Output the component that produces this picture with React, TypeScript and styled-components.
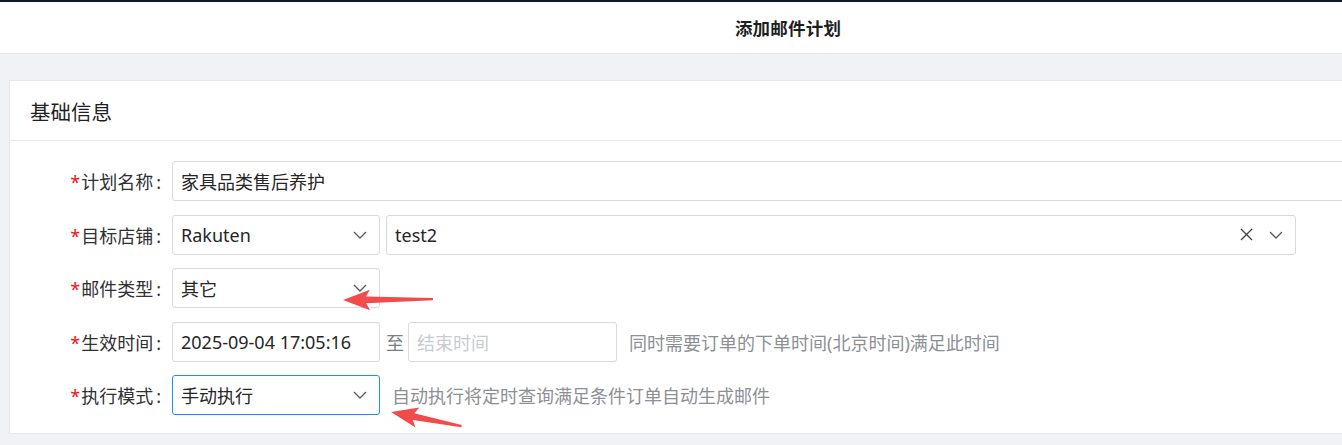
import styled, { createGlobalStyle } from "styled-components";

const GlobalStyle = createGlobalStyle`
  html, body {
    margin: 0;
    padding: 0;
    background: #f0f2f5;
    overflow: hidden;
  }
  body {
    font-family: "Noto Sans", "Noto Sans CJK SC", sans-serif;
    color: #303133;
  }
`;

const Page = styled.div`
  position: relative;
  width: 1576px;
  min-height: 445px;
  background: #f0f2f5;
`;

const TopBar = styled.div`
  height: 2px;
  background: #0c1a2b;
`;

const Header = styled.header`
  height: 51px;
  background: #ffffff;
  border-bottom: 1px solid #e4e6ea;
  display: flex;
  align-items: center;
  justify-content: center;
`;

const Title = styled.h1`
  margin: 0;
  font-size: 17.5px;
  font-weight: 700;
  color: #1f1f1f;
  letter-spacing: 0.2px;
`;

const Content = styled.main`
  padding: 26px 9px 0 9px;
`;

const Card = styled.section`
  background: #ffffff;
  border: 1px solid #e6e8eb;
`;

const CardHeader = styled.div`
  height: 59px;
  display: flex;
  align-items: center;
  padding-left: 20px;
  border-bottom: 1px solid #e6e8eb;
  font-size: 20.5px;
  color: #1f1f1f;
`;

const CardBody = styled.div`
  padding: 20px 0 18px 0;
  display: flex;
  flex-direction: column;
  gap: 13.5px;
`;

const FormRow = styled.div`
  display: flex;
  align-items: center;
  height: 40px;
`;

const Label = styled.label`
  width: 151px;
  flex: none;
  padding-right: 11px;
  text-align: right;
  font-size: 18px;
  color: #303133;
  white-space: nowrap;
`;

const Required = styled.span`
  color: #f01414;
  margin-right: 1px;
`;

const Colon = styled.span`
  margin-left: 3px;
`;

const Controls = styled.div`
  display: flex;
  align-items: center;
  gap: 6px;
  height: 100%;
`;

const Box = styled.div<{ $width: string; $focused?: boolean }>`
  box-sizing: border-box;
  width: ${(p) => p.$width};
  height: 40px;
  flex: none;
  display: flex;
  align-items: center;
  padding: 0 12px 0 8px;
  border: 1px solid ${(p) => (p.$focused ? "#1890ff" : "#d9d9d9")};
  border-radius: 3px;
  background: #fff;
  font-size: 18px;
  color: #262626;
`;

const Value = styled.span<{ $muted?: boolean }>`
  flex: 1;
  color: ${(p) => (p.$muted ? "#c8cbd0" : "#262626")};
  white-space: nowrap;
`;

const Icons = styled.span`
  display: flex;
  align-items: center;
  gap: 16px;
  color: #595959;
`;

const Sep = styled.span`
  font-size: 18px;
  color: #7a7d82;
  margin-right: -2px;
`;

const Help = styled.span`
  font-size: 18px;
  color: #8c8f94;
  margin-left: 6px;
  white-space: nowrap;
`;

const Overlay = styled.svg`
  position: absolute;
  left: 0;
  top: 0;
  pointer-events: none;
`;

const Chevron = () => (
  <svg width="14" height="8" viewBox="0 0 14 8">
    <path d="M1 1 L7 7 L13 1" fill="none" stroke="#595959" strokeWidth="1.3" />
  </svg>
);

const Clear = () => (
  <svg width="13" height="13" viewBox="0 0 13 13">
    <path d="M1 1 L12 12 M12 1 L1 12" fill="none" stroke="#404040" strokeWidth="1.3" />
  </svg>
);

function Arrow({ x, y, length, angle }: { x: number; y: number; length: number; angle: number }) {
  const L = length;
  return (
    <g transform={`translate(${x} ${y}) rotate(${angle})`}>
      <polygon
        points={`0,0 27,-10 23,-3.2 ${L},-1 ${L},1.2 23,3.6 27,10.5`}
        fill="#f34b4b"
      />
    </g>
  );
}

function SelectBox({ width, value, focused, clearable }: { width: string; value: string; focused?: boolean; clearable?: boolean }) {
  return (
    <Box $width={width} $focused={focused}>
      <Value>{value}</Value>
      <Icons>
        {clearable && <Clear />}
        <Chevron />
      </Icons>
    </Box>
  );
}

function FieldLabel({ text }: { text: string }) {
  return (
    <Label>
      <Required>*</Required>
      {text}
      <Colon>:</Colon>
    </Label>
  );
}

export default function App() {
  return (
    <>
      <GlobalStyle />
      <Page>
        <TopBar />
        <Header>
          <Title>添加邮件计划</Title>
        </Header>
        <Content>
          <Card>
            <CardHeader>基础信息</CardHeader>
            <CardBody>
              <FormRow>
                <FieldLabel text="计划名称" />
                <Box $width="1360px">
                  <Value>家具品类售后养护</Value>
                </Box>
              </FormRow>
              <FormRow>
                <FieldLabel text="目标店铺" />
                <Controls>
                  <SelectBox width="208px" value="Rakuten" />
                  <SelectBox width="910px" value="test2" clearable />
                </Controls>
              </FormRow>
              <FormRow>
                <FieldLabel text="邮件类型" />
                <SelectBox width="208px" value="其它" />
              </FormRow>
              <FormRow>
                <FieldLabel text="生效时间" />
                <Controls>
                  <Box $width="208px">
                    <Value>2025-09-04 17:05:16</Value>
                  </Box>
                  <Sep>至</Sep>
                  <Box $width="209px">
                    <Value $muted>结束时间</Value>
                  </Box>
                  <Help>同时需要订单的下单时间(北京时间)满足此时间</Help>
                </Controls>
              </FormRow>
              <FormRow>
                <FieldLabel text="执行模式" />
                <Controls>
                  <SelectBox width="208px" value="手动执行" focused />
                  <Help>自动执行将定时查询满足条件订单自动生成邮件</Help>
                </Controls>
              </FormRow>
            </CardBody>
          </Card>
        </Content>
        <Overlay width="1342" height="445">
          <Arrow x={343} y={300} length={90} angle={-0.6} />
          <Arrow x={391} y={412} length={72} angle={11.2} />
        </Overlay>
      </Page>
    </>
  );
}
